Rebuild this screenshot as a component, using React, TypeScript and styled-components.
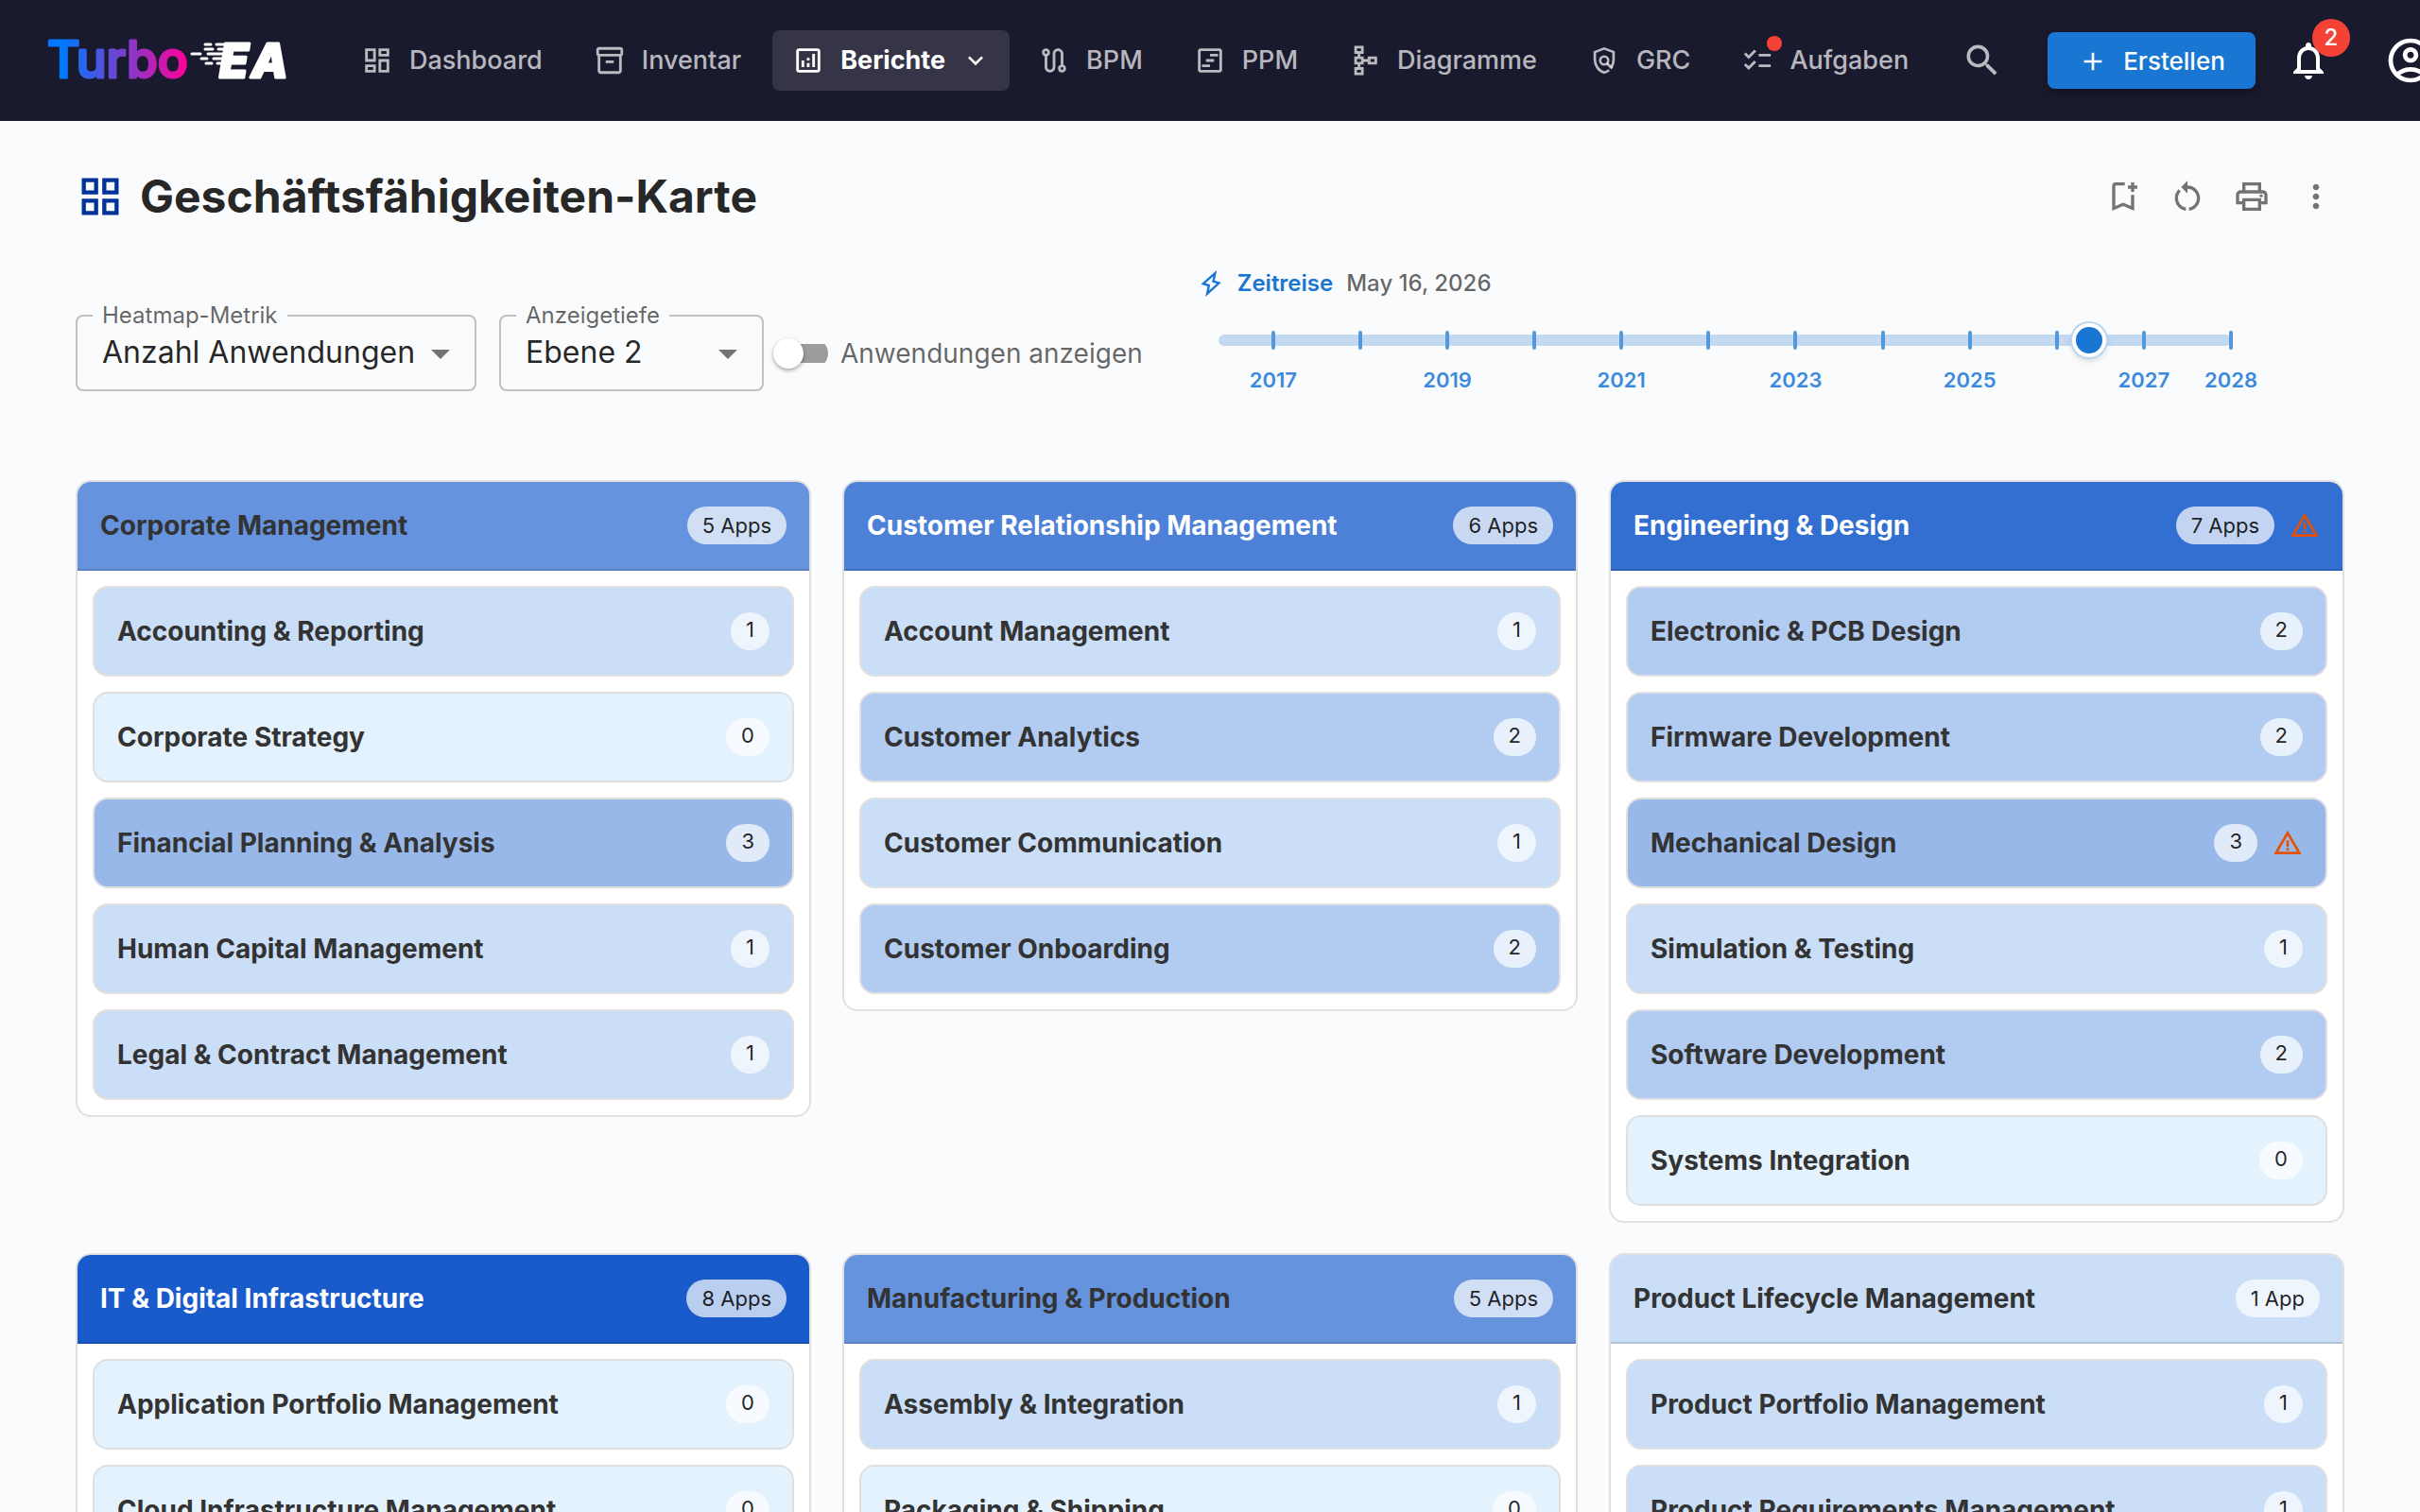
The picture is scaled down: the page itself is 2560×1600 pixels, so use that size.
import React, { useState } from "react";
import styled, { createGlobalStyle, css } from "styled-components";
import {
  MdAdd,
  MdArrowDropDown,
  MdChecklist,
  MdExpandMore,
  MdMoreVert,
  MdOutlineAccountCircle,
  MdOutlineAnalytics,
  MdOutlineBookmarkAdd,
  MdOutlineDashboard,
  MdOutlineGridView,
  MdOutlineInventory2,
  MdNotificationsNone,
  MdOutlinePrint,
  MdOutlineRoute,
  MdOutlineSchema,
  MdOutlineViewTimeline,
  MdRestartAlt,
  MdSearch,
  MdWarningAmber,
} from "react-icons/md";

const GlobalStyle = createGlobalStyle`
  * {
    box-sizing: border-box;
  }
  body {
    margin: 0;
    background-color: #fafbfd;
    color: rgba(0, 0, 0, 0.87);
    font-family: Inter, Roboto, sans-serif;
    font-size: 28px;
    -webkit-font-smoothing: antialiased;
  }
  button,
  select,
  input {
    font-family: inherit;
    margin: 0;
  }
  h1,
  h2,
  p,
  ul {
    margin: 0;
    padding: 0;
  }
  svg {
    flex-shrink: 0;
  }
`;

const Page = styled.div`
  height: 100vh;
  overflow: hidden;
`;

/* ---------- icons ---------- */

interface IconProps {
  size: number;
}

const ShieldSearch: React.FC<IconProps> = ({ size }) => (
  <svg width={size} height={size} viewBox="0 0 24 24" fill="none" stroke="currentColor" strokeWidth="1.9">
    <path d="M15.6 19.2c-1 .8-2.3 1.5-3.6 1.8-4.1-1.2-7-5.2-7-9.9V5.7l7-2.65 7 2.65v5.4c0 2.2-.6 4.3-1.7 6" />
    <circle cx="12" cy="12" r="3" />
    <path d="M14.1 14.1l3.9 3.9" />
  </svg>
);

const Bolt: React.FC<IconProps> = ({ size }) => (
  <svg width={size} height={size} viewBox="0 0 28 28" fill="none" stroke="#1976d2" strokeWidth="2.4">
    <path d="M18.3 3.2L5.8 14.2l6 1.9-1.7 8.7L22.4 13.6l-5.9-1.9z" />
  </svg>
);

/* ---------- top bar ---------- */

const TopBar = styled.header`
  display: flex;
  align-items: center;
  height: 128px;
  padding-left: 48px;
  overflow: hidden;
  background-color: #1a1a2e;
`;

const LogoLink = styled.a`
  display: flex;
  flex-shrink: 0;
  margin-right: 53px;
`;

const Nav = styled.nav`
  display: flex;
  flex-shrink: 0;
  gap: 9px;
`;

const NavButton = styled.button<{ $active?: boolean }>`
  display: flex;
  align-items: center;
  gap: 16px;
  height: 64px;
  padding: 0 24px 0 20px;
  border: none;
  border-radius: 8px;
  background-color: transparent;
  color: rgba(255, 255, 255, 0.7);
  font-size: 27px;
  font-weight: 500;
  line-height: 48px;
  white-space: nowrap;
  cursor: pointer;
  ${(props) =>
    props.$active &&
    css`
      padding-right: 20px;
      background-color: rgba(255, 255, 255, 0.12);
      color: #fff;
      font-weight: 700;
    `}
`;

const IconSlot = styled.span`
  position: relative;
  display: flex;
  justify-content: center;
  width: 36px;
`;

const Dot = styled.span`
  position: absolute;
  top: -9px;
  right: -8px;
  width: 16px;
  height: 16px;
  border-radius: 50%;
  background-color: #f44336;
`;

const RoundButton = styled.button<{ $tone: string; $pad: number }>`
  position: relative;
  display: flex;
  flex-shrink: 0;
  padding: ${(props) => props.$pad}px;
  border: none;
  border-radius: 50%;
  background-color: transparent;
  color: ${(props) => props.$tone};
  cursor: pointer;
`;

const Actions = styled.div`
  display: flex;
  align-items: center;
  flex-shrink: 0;
  margin-left: 16px;
`;

const CreateButton = styled.button`
  display: flex;
  align-items: center;
  gap: 16px;
  height: 60px;
  margin: 0 16px 0 31px;
  padding: 2px 32px 0;
  border: none;
  border-radius: 8px;
  background-color: #1976d2;
  box-shadow: 0 4px 8px rgba(0, 0, 0, 0.3);
  color: #fff;
  font-size: 26px;
  font-weight: 500;
  line-height: 44px;
  cursor: pointer;
`;

const Counter = styled.span`
  position: absolute;
  top: -4px;
  right: -4px;
  width: 40px;
  height: 40px;
  border-radius: 50%;
  background-color: #f44336;
  font-size: 24px;
  font-weight: 500;
  line-height: 40px;
  text-align: center;
`;

const Account = styled.div`
  margin-left: 24px;
`;

interface NavEntry {
  label: string;
  icon: React.ComponentType<IconProps>;
  active?: boolean;
  dot?: boolean;
}

const NAV: NavEntry[] = [
  { label: "Dashboard", icon: MdOutlineDashboard },
  { label: "Inventar", icon: MdOutlineInventory2 },
  { label: "Berichte", icon: MdOutlineAnalytics, active: true },
  { label: "BPM", icon: MdOutlineRoute },
  { label: "PPM", icon: MdOutlineViewTimeline },
  { label: "Diagramme", icon: MdOutlineSchema },
  { label: "GRC", icon: ShieldSearch },
  { label: "Aufgaben", icon: MdChecklist, dot: true },
];

const Logo: React.FC = () => (
  <svg width="260" height="88" viewBox="0 -16 260 88" role="img" aria-label="Turbo EA">
    <defs>
      <linearGradient id="turbo" gradientUnits="userSpaceOnUse" x1="2" y1="0" x2="150" y2="0">
        <stop offset="0" stopColor="#0078ff" />
        <stop offset="0.12" stopColor="#0078ff" />
        <stop offset="1" stopColor="#ff0099" />
      </linearGradient>
    </defs>
    <text
      x="2"
      y="46"
      fontFamily="Inter, sans-serif"
      fontSize="53"
      fontWeight="500"
      fill="url(#turbo)"
      stroke="url(#turbo)"
      strokeWidth="3"
      strokeLinejoin="round"
    >
      Turbo
    </text>
    <g
      fontFamily="Inter, sans-serif"
      fontSize="50"
      fontWeight="800"
      fontStyle="italic"
      fill="#fff"
      stroke="#fff"
      strokeWidth="3"
      strokeLinejoin="round"
    >
      <text x="184" y="46">
        E
      </text>
      <text x="218" y="46">
        A
      </text>
    </g>
    <g stroke="#fff" strokeWidth="3" strokeLinecap="round">
      <path d="M169 11h6M181 11h12M169 16h8M183 16h10M155 21h9M172 21h20M165 26h6M178 26h14M170 31h6M182 31h8" />
    </g>
  </svg>
);

const Header: React.FC = () => (
  <TopBar>
    <LogoLink href="#">
      <Logo />
    </LogoLink>
    <Nav>
      {NAV.map(({ label, icon: Icon, active, dot }) => (
        <NavButton key={label} $active={active}>
          <IconSlot>
            <Icon size={34} />
            {dot && <Dot />}
          </IconSlot>
          {label}
          {active && <MdExpandMore size={32} />}
        </NavButton>
      ))}
    </Nav>
    <Actions>
      <RoundButton $tone="rgba(255, 255, 255, 0.7)" $pad={16} aria-label="Suche">
        <MdSearch size={44} />
      </RoundButton>
      <CreateButton>
        <MdAdd size={32} />
        Erstellen
      </CreateButton>
      <RoundButton $tone="#fff" $pad={16} aria-label="Benachrichtigungen">
        <MdNotificationsNone size={48} />
        <Counter>2</Counter>
      </RoundButton>
      <Account>
        <RoundButton $tone="#fff" $pad={16} aria-label="Konto">
          <MdOutlineAccountCircle size={56} />
        </RoundButton>
      </Account>
    </Actions>
  </TopBar>
);

/* ---------- page head ---------- */

const Main = styled.main`
  padding: 48px 80px;
`;

const TitleRow = styled.div`
  display: flex;
  align-items: center;
  justify-content: space-between;
  height: 64px;
`;

const Title = styled.h1`
  display: flex;
  align-items: center;
  gap: 16px;
  font-size: 48px;
  font-weight: 700;
  line-height: 64px;
  svg {
    color: #003399;
  }
`;

const Tools = styled.div`
  display: flex;
  gap: 8px;
`;

/* ---------- filters ---------- */

const Filters = styled.div`
  display: flex;
  align-items: flex-end;
  gap: 24px;
  margin-top: 32px;
  height: 142px;
`;

const Field = styled.fieldset<{ $width: number }>`
  position: relative;
  flex-shrink: 0;
  width: ${(props) => props.$width}px;
  height: 94px;
  margin: 0;
  padding: 0 0 0 16px;
  border: 2px solid #c0c1c3;
  border-radius: 8px;
  legend {
    height: 28px;
    padding: 0 10px;
    color: rgba(0, 0, 0, 0.6);
    font-size: 24px;
    line-height: 28px;
  }
  svg {
    position: absolute;
    right: 12px;
    top: 2px;
    color: rgba(0, 0, 0, 0.54);
    pointer-events: none;
  }
`;

const Select = styled.select`
  display: block;
  width: 100%;
  height: 50px;
  padding: 0 64px 0 10px;
  border: none;
  outline: none;
  appearance: none;
  background-color: transparent;
  color: rgba(0, 0, 0, 0.87);
  font-size: 32px;
  line-height: 50px;
`;

const SwitchLabel = styled.label`
  display: flex;
  align-items: center;
  flex-shrink: 0;
  gap: 13px;
  height: 80px;
  margin-left: -14px;
  color: rgba(0, 0, 0, 0.6);
  font-size: 28px;
  white-space: nowrap;
`;

const Switch = styled.input`
  appearance: none;
  display: flex;
  align-items: center;
  width: 58px;
  height: 32px;
  background: linear-gradient(#9b9c9d, #9b9c9d) 6px 6px / 52px 20px no-repeat;
  border-radius: 16px;
  &::before {
    content: "";
    width: 32px;
    height: 32px;
    border-radius: 50%;
    background-color: #fff;
    box-shadow: 0 2px 4px rgba(0, 0, 0, 0.35);
  }
  &:checked {
    justify-content: flex-end;
    background-image: linear-gradient(#8cbae8, #8cbae8);
  }
`;

const TimeTravel = styled.div`
  flex: 1;
  align-self: stretch;
  margin-left: 34px;
  padding: 10px 120px 0 0;
`;

const TimeHead = styled.div`
  display: flex;
  align-items: center;
  height: 36px;
  font-size: 24px;
  font-weight: 500;
  line-height: 36px;
  color: rgba(0, 0, 0, 0.6);
  label {
    margin: 0 14px;
    color: #1976d2;
    font-weight: 600;
  }
`;

const Scale = styled.div`
  position: relative;
  height: 40px;
  margin: 22px 0 0 22px;
`;

const Rail = styled.div`
  position: absolute;
  top: 14px;
  left: 0;
  right: 0;
  height: 12px;
  border-radius: 6px;
  background-color: #c3d9f1;
`;

const Tick = styled.span`
  position: absolute;
  top: 10px;
  width: 4px;
  height: 20px;
  margin-left: -2px;
  border-radius: 2px;
  background-color: #5598dd;
`;

const Year = styled.span`
  position: absolute;
  top: 48px;
  width: 80px;
  margin-left: -40px;
  color: #3b8adc;
  font-size: 22px;
  font-weight: 600;
  line-height: 28px;
  text-align: center;
`;

const Range = styled.input`
  position: absolute;
  top: 6px;
  left: -14px;
  width: calc(100% + 28px);
  height: 28px;
  appearance: none;
  background: transparent;
  &::-webkit-slider-thumb {
    appearance: none;
    width: 28px;
    height: 28px;
    border-radius: 50%;
    background-color: #1976d2;
    box-shadow: 0 0 0 4px #fff, 0 0 0 6px #bcd6f1, 0 4px 8px 2px rgba(0, 0, 0, 0.25);
  }
`;

const START = 2016.37;
const END = 2028;
const YEARS = Array.from({ length: 12 }, (_, i) => 2017 + i);

const place = (year: number) => `${((year - START) / (END - START)) * 100}%`;

const TimeSlider: React.FC = () => {
  const [date, setDate] = useState(2026.37);
  return (
    <TimeTravel>
      <TimeHead>
        <Bolt size={28} />
        <label htmlFor="time">Zeitreise</label>
        May 16, 2026
      </TimeHead>
      <Scale>
        <Rail />
        {YEARS.map((year) => (
          <Tick key={year} style={{ left: place(year) }} />
        ))}
        {YEARS.filter((year) => year % 2 === 1 || year === END).map((year) => (
          <Year key={year} style={{ left: place(year) }}>
            {year}
          </Year>
        ))}
        <Range
          id="time"
          type="range"
          min={START}
          max={END}
          step="any"
          value={date}
          onChange={(e) => setDate(Number(e.target.value))}
        />
      </Scale>
    </TimeTravel>
  );
};

/* ---------- capability map ---------- */

const HEAT = [
  "#e3f2fd",
  "#cadef7",
  "#b1cbf1",
  "#98b8e9",
  "#7fa6e4",
  "#6693de",
  "#4d80d7",
  "#336ed1",
  "#1a5bcb",
];

const Grid = styled.section`
  display: grid;
  grid-template-columns: repeat(3, minmax(0, 1fr));
  align-items: start;
  gap: 32px 33px;
  margin-top: 94px;
`;

const Card = styled.article`
  overflow: hidden;
  border: 2px solid #e0e0e0;
  border-radius: 16px;
  background-color: #fff;
`;

const CardHead = styled.header<{ $count: number }>`
  display: flex;
  align-items: center;
  gap: 16px;
  height: 94px;
  padding: 0 24px;
  border-bottom: 2px solid rgba(0, 0, 0, 0.12);
  background-color: ${(props) => HEAT[props.$count]};
  color: ${(props) => (props.$count > 5 ? "#fff" : "#333")};
`;

const CardTitle = styled.h2`
  flex: 1;
  font-size: 28px;
  font-weight: 700;
  line-height: 40px;
`;

const List = styled.ul`
  display: flex;
  flex-direction: column;
  gap: 16px;
  padding: 16px;
  list-style: none;
`;

const Item = styled.li<{ $count: number }>`
  display: flex;
  align-items: center;
  gap: 16px;
  height: 96px;
  padding: 0 24px;
  border: 2px solid #e0e0e0;
  border-radius: 16px;
  background-color: ${(props) => HEAT[props.$count]};
  color: #333;
`;

const ItemName = styled.p`
  flex: 1;
  font-size: 28px;
  font-weight: 700;
  line-height: 40px;
  white-space: nowrap;
`;

const Chip = styled.span<{ $small?: boolean }>`
  height: 40px;
  padding: 0 16px;
  border-radius: 20px;
  background-color: rgba(255, 255, 255, 0.7);
  color: rgba(0, 0, 0, 0.87);
  font-size: 22px;
  line-height: ${(props) => (props.$small ? 36 : 40)}px;
  white-space: nowrap;
`;

type Capability = [name: string, count: number, warning?: boolean];

interface Domain {
  name: string;
  count: number;
  warning?: boolean;
  items: Capability[];
}

const DOMAINS: Domain[] = [
  {
    name: "Corporate Management",
    count: 5,
    items: [
      ["Accounting & Reporting", 1],
      ["Corporate Strategy", 0],
      ["Financial Planning & Analysis", 3],
      ["Human Capital Management", 1],
      ["Legal & Contract Management", 1],
    ],
  },
  {
    name: "Customer Relationship Management",
    count: 6,
    items: [
      ["Account Management", 1],
      ["Customer Analytics", 2],
      ["Customer Communication", 1],
      ["Customer Onboarding", 2],
    ],
  },
  {
    name: "Engineering & Design",
    count: 7,
    warning: true,
    items: [
      ["Electronic & PCB Design", 2],
      ["Firmware Development", 2],
      ["Mechanical Design", 3, true],
      ["Simulation & Testing", 1],
      ["Software Development", 2],
      ["Systems Integration", 0],
    ],
  },
  {
    name: "IT & Digital Infrastructure",
    count: 8,
    items: [
      ["Application Portfolio Management", 0],
      ["Cloud Infrastructure Management", 0],
    ],
  },
  {
    name: "Manufacturing & Production",
    count: 5,
    items: [
      ["Assembly & Integration", 1],
      ["Packaging & Shipping", 0],
    ],
  },
  {
    name: "Product Lifecycle Management",
    count: 1,
    items: [
      ["Product Portfolio Management", 1],
      ["Product Requirements Management", 1],
    ],
  },
];

const Warning = () => <MdWarningAmber size={32} color="#e65100" />;

const DomainCard: React.FC<{ domain: Domain }> = (props) => {
  const { name, count, warning, items } = props.domain;
  return (
    <Card>
      <CardHead $count={count}>
        <CardTitle>{name}</CardTitle>
        <Chip>{`${count} ${count === 1 ? "App" : "Apps"}`}</Chip>
        {warning && <Warning />}
      </CardHead>
      <List>
        {items.map(([label, apps, flagged]) => (
          <Item key={label} $count={apps}>
            <ItemName>{label}</ItemName>
            <Chip $small>{apps}</Chip>
            {flagged && <Warning />}
          </Item>
        ))}
      </List>
    </Card>
  );
};

const App: React.FC = () => {
  const [showApps, setShowApps] = useState(false);
  return (
    <Page>
      <GlobalStyle />
      <Header />
      <Main>
        <TitleRow>
          <Title>
            <MdOutlineGridView size={52} />
            Geschäftsfähigkeiten-Karte
          </Title>
          <Tools>
            <RoundButton $tone="rgba(0, 0, 0, 0.54)" $pad={10} aria-label="Ansicht speichern">
              <MdOutlineBookmarkAdd size={40} />
            </RoundButton>
            <RoundButton $tone="rgba(0, 0, 0, 0.54)" $pad={10} aria-label="Zurücksetzen">
              <MdRestartAlt size={40} />
            </RoundButton>
            <RoundButton $tone="rgba(0, 0, 0, 0.54)" $pad={10} aria-label="Drucken">
              <MdOutlinePrint size={40} />
            </RoundButton>
            <RoundButton $tone="rgba(0, 0, 0, 0.54)" $pad={10} aria-label="Mehr">
              <MdMoreVert size={40} />
            </RoundButton>
          </Tools>
        </TitleRow>
        <Filters>
          <Field $width={424}>
            <legend>
              <label htmlFor="metric">Heatmap-Metrik</label>
            </legend>
            <Select id="metric">
              <option>Anzahl Anwendungen</option>
            </Select>
            <MdArrowDropDown size={48} />
          </Field>
          <Field $width={280}>
            <legend>
              <label htmlFor="depth">Anzeigetiefe</label>
            </legend>
            <Select id="depth">
              <option>Ebene 2</option>
            </Select>
            <MdArrowDropDown size={48} />
          </Field>
          <SwitchLabel>
            <Switch
              type="checkbox"
              role="switch"
              checked={showApps}
              onChange={() => setShowApps((prev) => !prev)}
            />
            Anwendungen anzeigen
          </SwitchLabel>
          <TimeSlider />
        </Filters>
        <Grid>
          {DOMAINS.map((domain) => (
            <DomainCard key={domain.name} domain={domain} />
          ))}
        </Grid>
      </Main>
    </Page>
  );
};

export default App;
